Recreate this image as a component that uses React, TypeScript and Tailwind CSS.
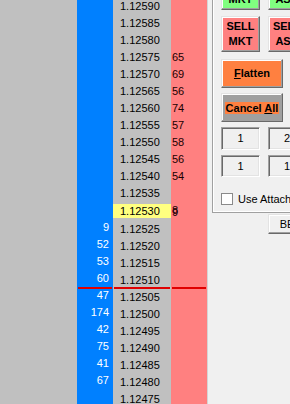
import React from "react";

const prices: string[] = [];
for (let i = 12590; i >= 12475; i -= 5) {
    prices.push("1." + i);
}

const bids: Record<string, string> = {
    "1.12525": "9",
    "1.12520": "52",
    "1.12515": "53",
    "1.12510": "60",
    "1.12505": "47",
    "1.12500": "174",
    "1.12495": "42",
    "1.12490": "75",
    "1.12485": "41",
    "1.12480": "67",
};

const asks: Record<string, string> = {
    "1.12575": "65",
    "1.12570": "69",
    "1.12565": "56",
    "1.12560": "74",
    "1.12555": "57",
    "1.12550": "58",
    "1.12545": "56",
    "1.12540": "54",
};

const lastPrice = "1.12530";

const raised =
    "border border-t-[#e3e3e3] border-l-[#e3e3e3] border-r-[#696969] border-b-[#696969] shadow-[inset_-1px_-1px_0_#a0a0a0,inset_1px_1px_0_#ffffff]";
const sunken =
    "border border-t-[#a0a0a0] border-l-[#a0a0a0] border-r-white border-b-white shadow-[inset_1px_1px_0_#696969,inset_-1px_-1px_0_#e3e3e3]";

const RedLine = () => (
    <div className="absolute top-[287px] left-px right-px h-[2px] bg-[#e00000]"/>
);

const TwoLine = ({top, bottom, color, width}: { top: string; bottom: string; color: string; width: string }) => (
    <div className={`${width} h-[36px] ${color} ${raised} flex flex-col items-center justify-center font-bold leading-[15px]`}>
        <span>{top}</span>
        <span>{bottom}</span>
    </div>
);

const App = () => {
    return (
        <div
            className="flex w-[290px] h-[404px] overflow-hidden bg-[#c0c0c0] text-[11px] text-black"
            style={{fontFamily: '"Liberation Sans", Arial, sans-serif'}}
        >
            <div className="w-[77px] shrink-0 bg-[#c0c0c0]"/>

            {/* bid sizes */}
            <div className="relative w-[36px] shrink-0 bg-[#0080ff]">
                <div className="-mt-[2px]">
                    {prices.map((p) => (
                        <div key={p} className="h-[17px] leading-[17px] text-right pr-[4px] text-white">
                            {bids[p] || ""}
                        </div>
                    ))}
                </div>
                <RedLine/>
            </div>

            {/* prices */}
            <div className="relative w-[58px] shrink-0 bg-[#c0c0c0]">
                <div className="-mt-[2px]">
                    {prices.map((p) => (
                        <div key={p} className="h-[17px]">
                            <div
                                className={`pl-[7px] ${
                                    p === lastPrice ? "mt-[2px] h-[14px] bg-[#ffff80] leading-[14px]" : "pt-[1px] h-[17px] leading-[15px]"
                                }`}
                            >
                                {p}
                            </div>
                        </div>
                    ))}
                </div>
                <RedLine/>
            </div>

            {/* ask sizes */}
            <div className="relative w-[36px] shrink-0 bg-[#ff8080]">
                <div className="-mt-[2px]">
                    {prices.map((p) => (
                        <div key={p} className="h-[17px] leading-[17px] pl-px text-[#1a0000]">
                            {p === lastPrice ? (
                                <span className="relative">
                                    8<span className="absolute left-0 top-0">9</span>
                                </span>
                            ) : (
                                asks[p] || ""
                            )}
                        </div>
                    ))}
                </div>
                <RedLine/>
            </div>

            <div className="w-px shrink-0 bg-[#d4d4d4]"/>

            {/* order panel */}
            <div className="flex-1 bg-[#f0f0f0] overflow-hidden">
                <div className="ml-[4px] h-[239px] w-[200px] border-l border-b border-[#a0a0a0]">
                    <div className="h-full border-l border-b border-white pl-[7px]">
                        <div className="-mt-[26px] flex gap-[8px]">
                            <TwoLine top="BUY" bottom="MKT" color="bg-[#80ff80]" width="w-[39px]"/>
                            <TwoLine top="BUY" bottom="ASK" color="bg-[#80ff80]" width="w-[38px]"/>
                        </div>

                        <div className="mt-[6px] flex gap-[8px]">
                            <TwoLine top="SELL" bottom="MKT" color="bg-[#ff8080]" width="w-[39px]"/>
                            <TwoLine top="SELL" bottom="ASK" color="bg-[#ff8080]" width="w-[38px]"/>
                        </div>

                        <div className={`mt-[7px] w-[62px] h-[29px] bg-[#ff8040] ${raised} flex items-center justify-center font-bold`}>
                            <span><span className="underline">F</span>latten</span>
                        </div>

                        <div className={`mt-[5px] w-[62px] h-[29px] bg-[#a0a0a0] ${raised} flex items-center justify-center font-bold`}>
                            <span className="bg-[#ff8040] leading-[12px] px-px">
                                Cancel <span className="underline">A</span>ll
                            </span>
                        </div>

                        <div className="mt-[5px] flex gap-[8px]">
                            <div className={`w-[39px] h-[23px] ${sunken} flex items-center justify-center`}>1</div>
                            <div className={`w-[38px] h-[23px] ${sunken} flex items-center justify-center`}>2</div>
                        </div>
                        <div className="mt-[5px] flex gap-[8px]">
                            <div className={`w-[39px] h-[22px] ${sunken} flex items-center justify-center`}>1</div>
                            <div className={`w-[38px] h-[22px] ${sunken} flex items-center justify-center`}>1</div>
                        </div>

                        <div className="mt-[16px] flex items-center h-[12px] whitespace-nowrap">
                            <div className="w-[12px] h-[12px] border border-[#8a8a8a] bg-white shrink-0"/>
                            <span className="ml-[5px]">Use Attached Orders</span>
                        </div>

                        <div className={`mt-[9px] ml-[47px] w-[38px] h-[20px] bg-[#f0f0f0] ${raised} flex items-center justify-center`}>
                            BE
                        </div>
                    </div>
                </div>
            </div>
        </div>
    );
};

export default App;
